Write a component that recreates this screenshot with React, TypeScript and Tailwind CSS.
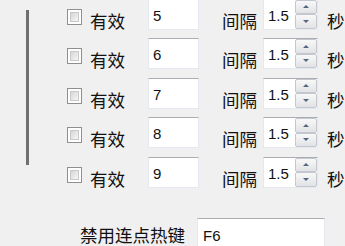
import React from 'react';

const rows = ['5', '6', '7', '8', '9'];

function Checkbox() {
  return (
    <div className="mt-[10px] w-[15px] h-[16px] shrink-0 border border-[#8f8f8f] bg-white p-[2px]">
      <div className="w-full h-full border border-[#c8c8c8] bg-gradient-to-br from-[#d6d6d6] to-[#f7f7f7]" />
    </div>
  );
}

function SpinButton({ up }: { up?: boolean }) {
  return (
    <div className="flex-1 flex items-center justify-center border border-[#c3c8d0] rounded-[2px] bg-gradient-to-b from-[#f8f8f8] to-[#e2e3e6]">
      <svg width="6" height="3" viewBox="0 0 6 3">
        {up ? (
          <path d="M0 3 L3 0 L6 3 Z" fill="#56657f" />
        ) : (
          <path d="M0 0 L3 3 L6 0 Z" fill="#56657f" />
        )}
      </svg>
    </div>
  );
}

function Row({ value }: { value: string }) {
  return (
    <div className="flex items-start h-[31px]">
      <Checkbox />
      <span className="ml-[8px] mt-[15px] w-[35px] text-[17.5px] leading-[17.5px] whitespace-nowrap">有效</span>
      <div className="ml-[23px] w-[51px] h-[31px] shrink-0 bg-white border border-[#e3e9ef] border-t-[#abadb3] pl-[4px] pt-[8px] text-[15px] leading-[15px]">
        {value}
      </div>
      <span className="ml-[23px] mt-[15px] w-[35px] text-[17.5px] leading-[17.5px] whitespace-nowrap">间隔</span>
      <div className="ml-[6px] w-[55px] h-[31px] shrink-0 flex bg-white border border-[#e3e9ef] border-t-[#abadb3]">
        <div className="flex-1 pl-[4px] pt-[8px] text-[15px] leading-[15px]">1.5</div>
        <div className="w-[22px] flex flex-col">
          <SpinButton up />
          <SpinButton />
        </div>
      </div>
      <span className="ml-[9px] mt-[15px] text-[17.5px] leading-[17.5px] whitespace-nowrap">秒</span>
    </div>
  );
}

export default function App() {
  return (
    <div className="w-[345px] h-[246px] overflow-hidden bg-[#f0f0f0] text-[#111111] flex font-['Liberation_Sans','Noto_Sans_CJK_SC',sans-serif]">
      <div className="w-[67px] shrink-0 pl-[26px] pt-[10px]">
        <div className="w-[3px] h-[155px] bg-[#707070]" />
      </div>
      <div className="flex flex-col">
        <div className="mt-[-1.5px] flex flex-col gap-[8.5px]">
          {rows.map((v) => (
            <Row key={v} value={v} />
          ))}
        </div>
        <div className="mt-[30.5px] ml-[13px] flex items-start">
          <span className="mt-[10px] w-[117px] text-[17.5px] leading-[17.5px] whitespace-nowrap">禁用连点热键</span>
          <div className="w-[128px] h-[32px] shrink-0 bg-white border border-[#e3e9ef] border-t-[#abadb3] pl-[5px] pt-[9px] text-[15px] leading-[15px]">
            F6
          </div>
        </div>
      </div>
    </div>
  );
}
